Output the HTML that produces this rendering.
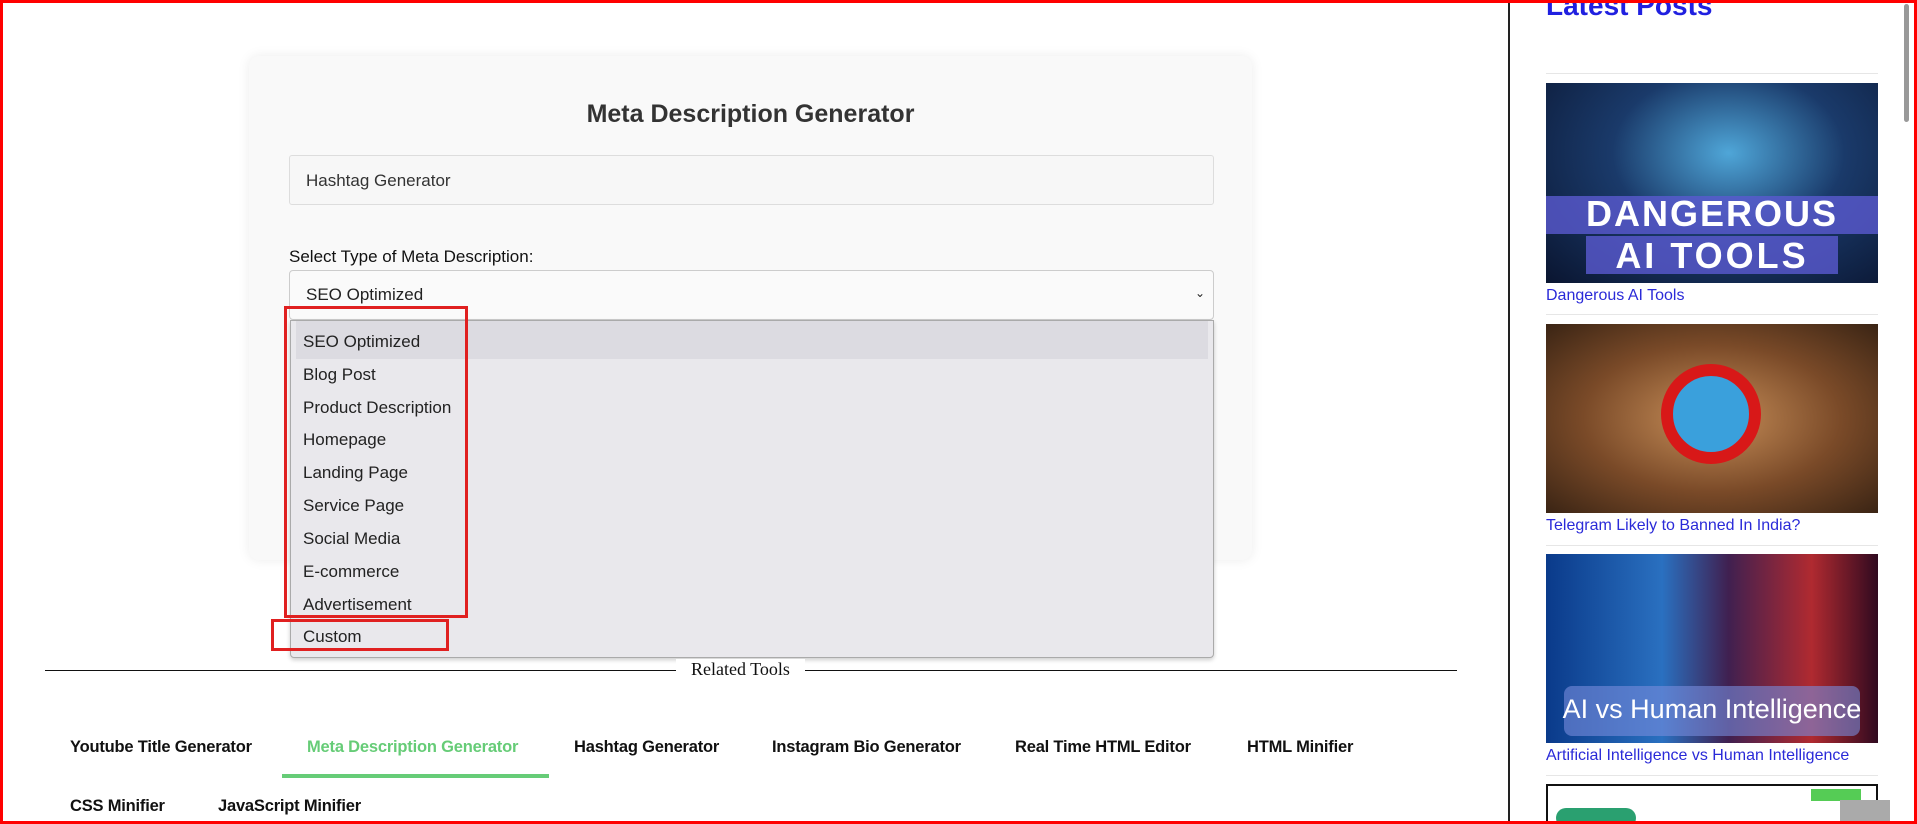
<!DOCTYPE html>
<html><head><meta charset="utf-8"><style>
*{box-sizing:border-box;margin:0;padding:0}
html,body{width:1917px;height:824px;overflow:hidden;background:#fff;font-family:"Liberation Sans",Arial,sans-serif;position:relative}
.abs{position:absolute}
.card{left:249px;top:56px;width:1003px;height:504px;background:#f9f9f9;border-radius:10px;box-shadow:0 0 12px rgba(0,0,0,.08)}
.title{left:249px;width:1003px;top:100px;text-align:center;font-size:25px;font-weight:bold;color:#333}
.input{left:289px;top:155px;width:925px;height:50px;border:1px solid #ddd;border-radius:3px;background:#f7f7f7;font-size:17px;color:#333;padding:15px 16px}
.label{left:289px;top:247px;font-size:17px;color:#111}
.select{left:289px;top:270px;width:925px;height:50px;border:1px solid #ccc;border-radius:4px;background:#fafafa;font-size:17px;color:#222;padding:14px 16px}
.dd{left:290px;top:320px;width:924px;height:338px;background:#e9e8ec;border:1px solid #aaa;border-radius:0 0 4px 4px;box-shadow:0 2px 4px rgba(0,0,0,.2)}
.opt{position:absolute;left:12px;font-size:17px;color:#222}
.red{border:3px solid #e02020}
.tab{position:absolute;font-size:16.5px;font-weight:bold;color:#111;top:738px;letter-spacing:-0.2px}
.cap{position:absolute;left:1546px;font-size:16px;color:#2a2ad8}
.sep{position:absolute;left:1546px;width:332px;height:1px;background:#e6e6e6}
</style></head><body>
<div class="abs card"></div>
<div class="abs title">Meta Description Generator</div>
<div class="abs input">Hashtag Generator</div>
<div class="abs label">Select Type of Meta Description:</div>
<div class="abs select">SEO Optimized<span style="position:absolute;right:8px;top:15px;font-size:12px">&#8964;</span></div>
<div class="abs dd">
<div class="opt" style="top:0;left:5px;width:912px;height:38px;background:#dcdbe1"></div>
<div class="opt" style="top:11px">SEO Optimized</div>
<div class="opt" style="top:44px">Blog Post</div>
<div class="opt" style="top:77px">Product Description</div>
<div class="opt" style="top:109px">Homepage</div>
<div class="opt" style="top:142px">Landing Page</div>
<div class="opt" style="top:175px">Service Page</div>
<div class="opt" style="top:208px">Social Media</div>
<div class="opt" style="top:241px">E-commerce</div>
<div class="opt" style="top:274px">Advertisement</div>
<div class="opt" style="top:306px">Custom</div>
</div>
<div class="abs red" style="left:284px;top:306px;width:184px;height:312px"></div>
<div class="abs red" style="left:271px;top:619px;width:178px;height:32px"></div>
<div class="abs" style="left:45px;top:670px;width:1412px;height:1px;background:#111"></div>
<div class="abs" style="left:676px;top:659px;background:#fff;padding:0 15px;font-family:'Liberation Serif',serif;font-size:18px;color:#111">Related Tools</div>
<div class="tab" style="left:70px">Youtube Title Generator</div>
<div class="tab" style="left:307px;color:#66cc77">Meta Description Generator</div>
<div class="abs" style="left:282px;top:774px;width:267px;height:4px;background:#66cc77"></div>
<div class="tab" style="left:574px">Hashtag Generator</div>
<div class="tab" style="left:772px">Instagram Bio Generator</div>
<div class="tab" style="left:1015px">Real Time HTML Editor</div>
<div class="tab" style="left:1247px">HTML Minifier</div>
<div class="tab" style="left:70px;top:797px">CSS Minifier</div>
<div class="tab" style="left:218px;top:797px">JavaScript Minifier</div>

<div class="abs" style="left:1508px;top:0;width:2px;height:824px;background:#222"></div>
<div class="abs" style="left:1546px;top:-10px;font-size:28px;font-weight:bold;color:#2020e0">Latest Posts</div>
<div class="sep" style="top:73px"></div>
<div class="abs" style="left:1546px;top:83px;width:332px;height:200px;background:radial-gradient(ellipse at 55% 35%,#4fa6d8 0%,#1a3a6a 45%,#0a1530 100%)">
<div style="position:absolute;left:0;top:113px;width:332px;height:38px;background:#5a5ad0;opacity:.8"></div>
<div style="position:absolute;left:0;top:110px;width:332px;text-align:center;color:#fff;font-size:36px;font-weight:bold;letter-spacing:2px">DANGEROUS</div>
<div style="position:absolute;left:40px;top:153px;width:252px;height:38px;background:#5a5ad0;opacity:.8"></div>
<div style="position:absolute;left:0;top:152px;width:332px;text-align:center;color:#fff;font-size:36px;font-weight:bold;letter-spacing:3px">AI TOOLS</div>
</div>
<div class="cap" style="top:287px">Dangerous AI Tools</div>
<div class="sep" style="top:314px"></div>
<div class="abs" style="left:1546px;top:324px;width:332px;height:189px;background:radial-gradient(ellipse at 50% 50%,#c9905a 0%,#7a4a28 55%,#3a2414 100%)">
<div style="position:absolute;left:115px;top:40px;width:100px;height:100px;border-radius:50%;border:12px solid #d81818;background:#3aa0dc"></div>
</div>
<div class="cap" style="top:517px">Telegram Likely to Banned In India?</div>
<div class="sep" style="top:545px"></div>
<div class="abs" style="left:1546px;top:554px;width:332px;height:189px;background:linear-gradient(90deg,#0a3a8a 0%,#2a70c0 35%,#402050 55%,#b02a30 80%,#300a20 100%)">
<div style="position:absolute;left:18px;top:132px;width:296px;height:50px;border-radius:8px;background:rgba(120,140,220,.6)"></div>
<div style="position:absolute;left:0;top:140px;width:332px;text-align:center;color:#fff;font-size:27px">AI vs Human Intelligence</div>
</div>
<div class="cap" style="top:747px">Artificial Intelligence vs Human Intelligence</div>
<div class="sep" style="top:775px"></div>
<div class="abs" style="left:1546px;top:784px;width:332px;height:40px;border:2px solid #111;background:#fff">
<div style="position:absolute;left:8px;top:22px;width:80px;height:20px;border-radius:10px;background:#2aa070"></div>
<div style="position:absolute;left:263px;top:3px;width:50px;height:12px;background:#55cc55"></div>
</div>
<div class="abs" style="left:1840px;top:800px;width:50px;height:24px;background:#aaa"></div>
<div class="abs" style="left:1904px;top:4px;width:5px;height:118px;background:#999;border-radius:3px"></div>
<div class="abs" style="left:0;top:0;width:1917px;height:824px;border:3px solid #f00"></div>
</body></html>
